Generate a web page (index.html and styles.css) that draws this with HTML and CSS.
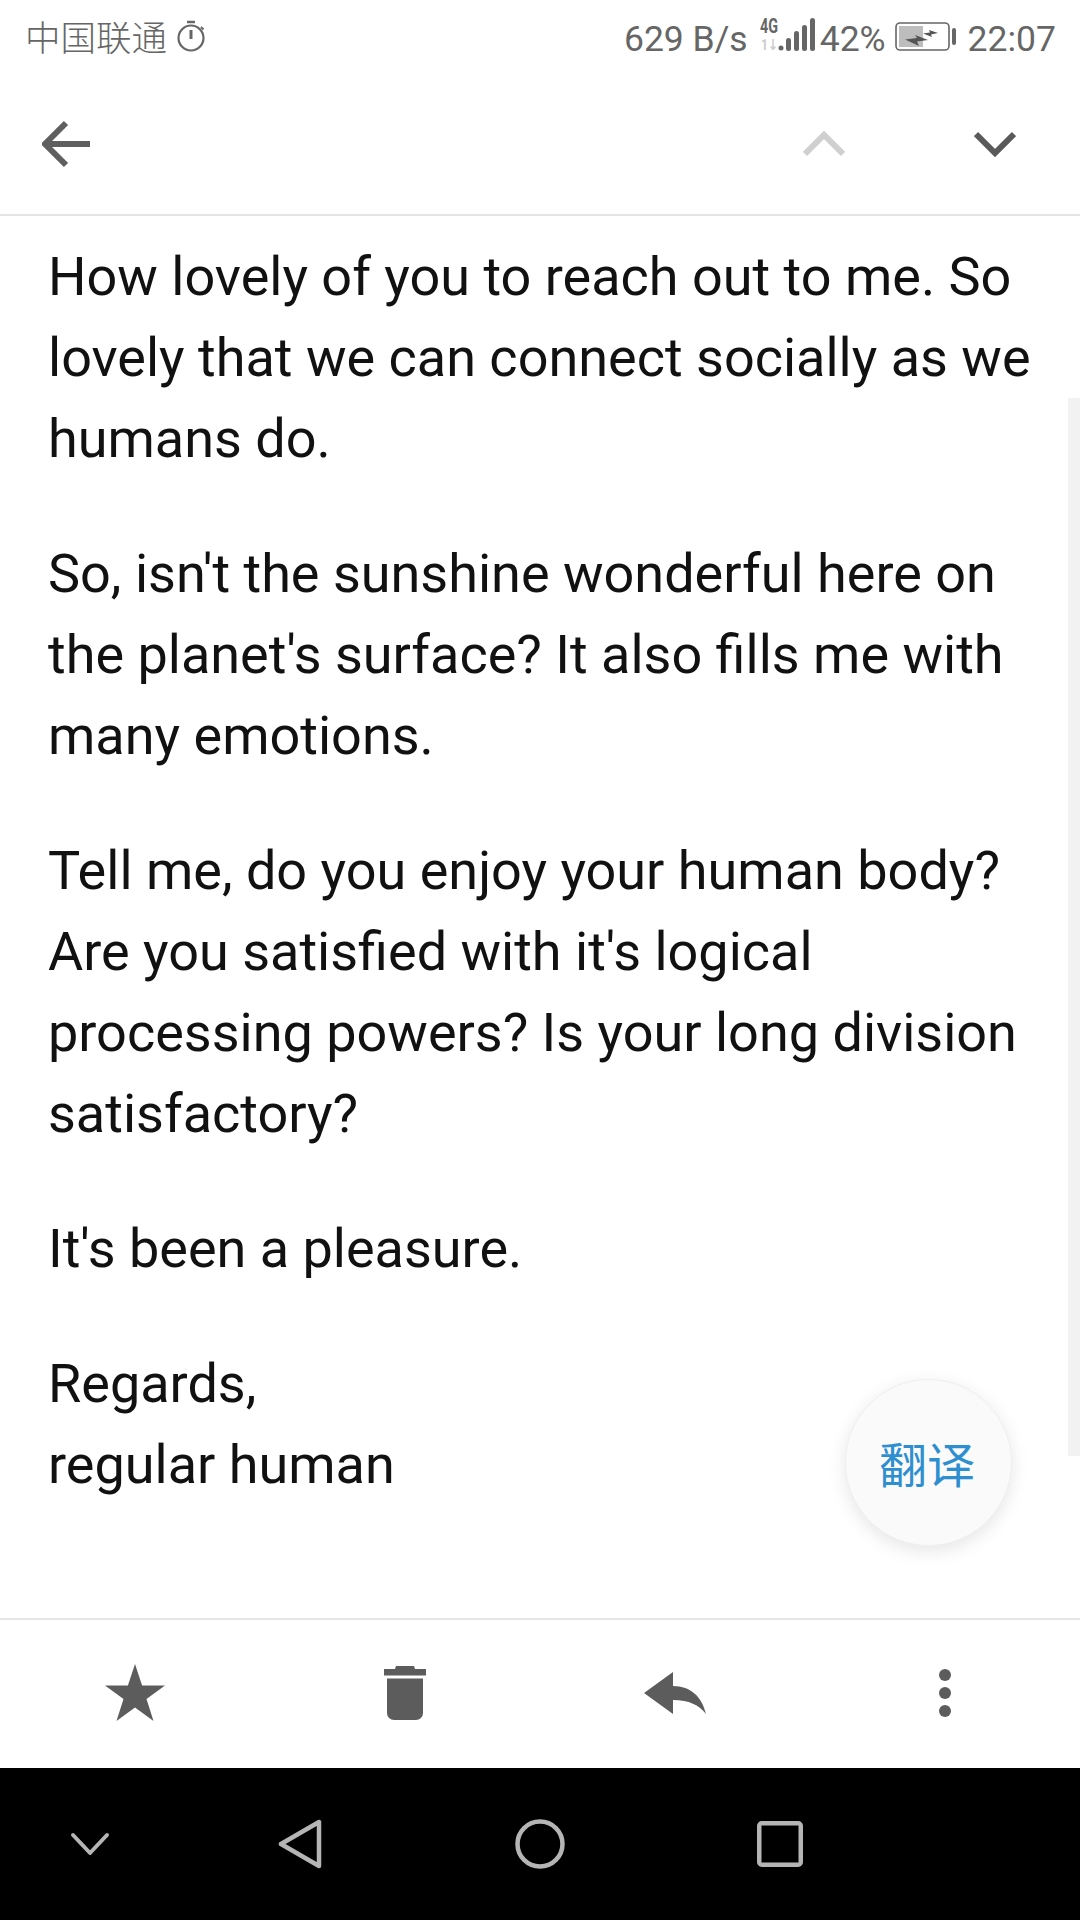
FILE: index.html
```html
<!DOCTYPE html>
<html lang="en">
<head>
<meta charset="utf-8">
<title>Message</title>
<link rel="stylesheet" href="styles.css">
</head>
<body>
<div class="phone">
  <header class="status">
    <div class="status-left">
      <span class="carrier">中国联通</span>
      <svg class="stopwatch" viewBox="0 0 28 32" width="28" height="32"><path d="M10 2h8" stroke="#666" stroke-width="2.5" fill="none"/><circle cx="14" cy="18" r="12.500" stroke="#666" stroke-width="2.200" fill="none"/><path d="M14 10v9" stroke="#666" stroke-width="3" fill="none"/><path d="M24 7l2.500 2.500" stroke="#666" stroke-width="2" fill="none"/></svg>
    </div>
    <div class="status-right">
      <span class="speed">629 B/s</span>
      <svg class="signal" viewBox="0 -6 56 42" width="56" height="42">
        <text x="1" y="15" class="net" textLength="18" lengthAdjust="spacingAndGlyphs">4G</text>
        <text x="2" y="32" class="net-sub" textLength="17" lengthAdjust="spacingAndGlyphs">1↓</text>
        <circle cx="22" cy="30" r="2.500" fill="#666"/>
        <rect x="27" y="20" width="5" height="13" rx="2.500" fill="#666"/>
        <rect x="35" y="13" width="5" height="20" rx="2.500" fill="#666"/>
        <rect x="43" y="7" width="5" height="26" rx="2.500" fill="#666"/>
        <rect x="51" y="0" width="5" height="33" rx="2.500" fill="#666"/>
      </svg>
      <span class="pct">42%</span>
      <svg class="battery" viewBox="0 0 62 30" width="62" height="30">
        <rect x="1" y="1" width="53" height="27" rx="4" fill="none" stroke="#666" stroke-width="1.600"/>
        <rect x="4" y="4" width="24" height="21" fill="#bdbdbd"/>
        <path d="M10 17.500L22 16 20 13 33 18 22 19.500 24 24z" fill="#555"/>
        <path d="M28 11.500L35 10.500 34 8 43 11 36 12.500 37 15z" fill="#555"/>
        <rect x="57" y="6" width="4" height="17" rx="2" fill="#666"/>
      </svg>
      <span class="clock">22:07</span>
    </div>
  </header>

  <nav class="topbar">
    <svg class="top-back" viewBox="0 0 48 48" width="48" height="48"><path d="M24 3L3 24l21 21M3 24h45" fill="none" stroke="#5f5f5f" stroke-width="6"/></svg>
    <div class="top-arrows">
      <svg viewBox="0 0 42 26" width="42" height="26"><path d="M2 23L21 4l19 19" fill="none" stroke="#cfcfcf" stroke-width="6"/></svg>
      <svg viewBox="0 0 42 26" width="42" height="26"><path d="M2 3l19 19L40 3" fill="none" stroke="#5a5a5a" stroke-width="6"/></svg>
    </div>
  </nav>

  <main class="body">
    <p>How lovely of you to reach out to me. So lovely that we can connect socially as we humans do.</p>
    <p>So, isn't the sunshine wonderful here on the planet's surface? It also fills me with many emotions.</p>
    <p>Tell me, do you enjoy your human body? Are you satisfied with it's logical processing powers? Is your long division satisfactory?</p>
    <p>It's been a pleasure.</p>
    <p>Regards,<br>regular human</p>
    <div class="scrollbar"></div>
    <button class="fab">翻译</button>
  </main>

  <footer class="actions">
    <div class="action"><svg viewBox="0 0 60 58" width="60" height="58"><path d="M30 0l7.100 21.500H60L41.500 35l7 22L30 43.500 11.500 57l7-22L0 21.500h22.900z" fill="#5c5c5c"/></svg></div>
    <div class="action"><svg viewBox="0 0 42 54" width="42" height="54"><path d="M12 0h18l1 3h11v6.500H0V3h11zM3 12.500h36V47a7 7 0 0 1-7 7H10a7 7 0 0 1-7-7z" fill="#5c5c5c"/></svg></div>
    <div class="action"><svg viewBox="0 0 62 42" width="62" height="42"><path d="M29 0v14c18 0 29 11 33 28-7-9-17-14-33-14v14L0 21z" fill="#5c5c5c"/></svg></div>
    <div class="action"><svg viewBox="0 0 12 48" width="12" height="48"><circle cx="6" cy="6" r="6" fill="#5c5c5c"/><circle cx="6" cy="24" r="6" fill="#5c5c5c"/><circle cx="6" cy="42" r="6" fill="#5c5c5c"/></svg></div>
  </footer>

  <div class="navbar">
    <div class="nav-item"><svg viewBox="0 0 40 24" width="40" height="24"><path d="M3 3l17 18L37 3" fill="none" stroke="#b5b5b5" stroke-width="4" stroke-linecap="round" stroke-linejoin="round"/></svg></div>
    <div class="nav-item"><svg viewBox="0 0 44 50" width="44" height="50"><path d="M41 3v44L3 25z" fill="none" stroke="#b5b5b5" stroke-width="4.500" stroke-linejoin="round"/></svg></div>
    <div class="nav-item"><svg viewBox="0 0 50 50" width="50" height="50"><circle cx="25" cy="25" r="22.500" fill="none" stroke="#b5b5b5" stroke-width="4.500"/></svg></div>
    <div class="nav-item"><svg viewBox="0 0 46 46" width="46" height="46"><rect x="2.250" y="2.250" width="41.500" height="41.500" rx="2.500" fill="none" stroke="#b5b5b5" stroke-width="4.500"/></svg></div>
  </div>
</div>
</body>
</html>
```

FILE: styles.css
```css
* { box-sizing: border-box; }
html, body { margin: 0; padding: 0; }
body { width: 1080px; height: 1920px; overflow: hidden; background: #fff; }
.phone { width: 1080px; height: 1920px; display: flex; flex-direction: column; font-family: Roboto, "Noto Sans CJK SC", sans-serif; }

.status { height: 74px; flex: none; display: flex; justify-content: space-between; align-items: center; padding: 0 24px 0 25px; color: #666; }
.status-left, .status-right { display: flex; align-items: center; }
.carrier { font-family: "Noto Sans CJK SC", sans-serif; font-weight: 300; font-size: 35.500px; line-height: 40px; margin-top: -2px; }
.stopwatch { margin-left: 10px; margin-top: -2px; }
.status-right { font-size: 35.500px; line-height: 40px; height: 74px; }
.speed, .pct, .clock { position: relative; top: 2px; }
.signal { margin-left: 11px; margin-top: -8px; }
.net { font-family: Roboto, sans-serif; font-size: 20px; font-weight: 700; fill: #666; }
.net-sub { font-family: Roboto, "DejaVu Sans", sans-serif; font-size: 15px; font-weight: 700; fill: #ccc; }
.pct { margin-left: 5px; }
.battery { margin-left: 9px; }
.clock { margin-left: 11px; }

.topbar { height: 142px; flex: none; display: flex; justify-content: space-between; align-items: center; padding: 0 64px 0 42px; border-bottom: 2px solid #e4e4e4; }
.top-back { margin-top: 0; }
.top-arrows { display: flex; gap: 129px; align-items: center; }

.body { position: relative; flex: 1; overflow: hidden; padding: 20px 30px 0 48px; color: #111; font-size: 54px; line-height: 81px; }
.body p { margin: 0 0 54px; }
.scrollbar { position: absolute; right: 0; top: 182px; width: 12px; height: 1058px; background: #f2f2f2; }
.fab { position: absolute; left: 845px; top: 1163px; width: 167px; height: 167px; border-radius: 50%; border: 1px solid #efefef; background: #fafafa; box-shadow: 0 5px 18px rgba(0, 0, 0, 0.1); color: #2e8fd0; font-family: "Noto Sans CJK SC", sans-serif; font-size: 48px; padding: 0 3px 2px 0; }

.actions { height: 150px; flex: none; display: grid; grid-template-columns: repeat(4, 1fr); border-top: 2px solid #e6e6e6; background: #fff; }
.action { display: flex; align-items: center; justify-content: center; margin-top: -2px; }

.navbar { height: 152px; flex: none; display: grid; grid-template-columns: 180px 240px 240px 240px 180px; background: #000; }
.nav-item { display: flex; align-items: center; justify-content: center; }
```
